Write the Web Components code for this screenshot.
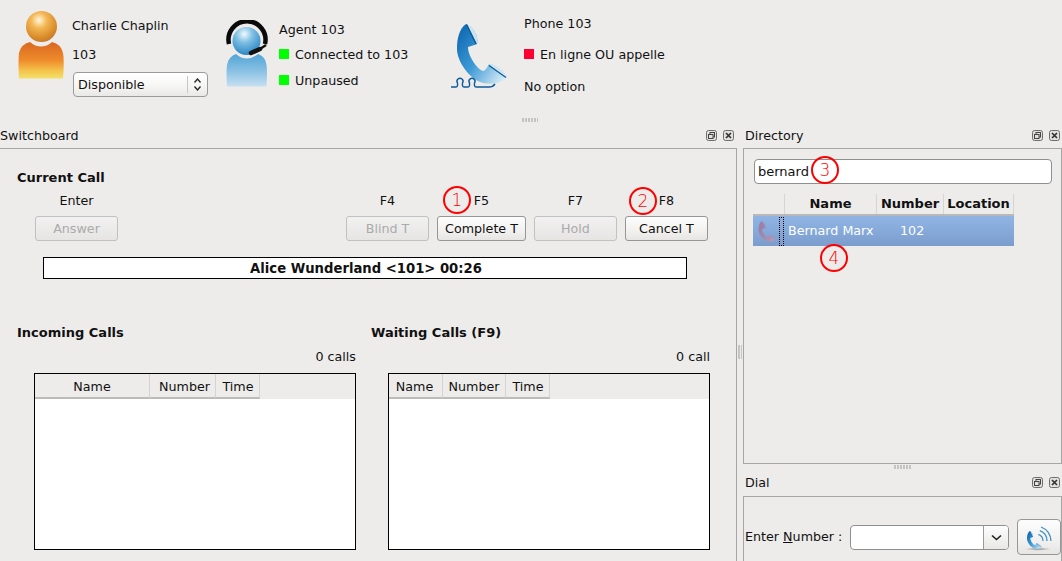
<!doctype html>
<html><head><meta charset="utf-8">
<style>
html,body{margin:0;padding:0;width:1062px;height:561px;overflow:hidden;background:#edeceb;}
body{font:12.7px/20px "DejaVu Sans",sans-serif;color:#111;}
</style></head><body>
<x-app>
  <x-top>
    <x-person style="--x:18px;--w:54px;--icon-top:11px;--text-top:15px;--tw:150px">
      <x-avatar slot="icon" kind="user"></x-avatar>
      <x-line>Charlie Chaplin</x-line>
      <x-line style="margin-top:9px">103</x-line>
      <x-select style="margin:8px 0 0 1px">Disponible</x-select>
    </x-person>
    <x-person style="--x:3px;--w:54px;--icon-top:20px;--text-top:19px;--tw:171px">
      <x-avatar slot="icon" kind="agent"></x-avatar>
      <x-line>Agent 103</x-line>
      <x-line style="margin-top:5px"><x-led color="#00ff00"></x-led>Connected to 103</x-line>
      <x-line style="margin-top:6px"><x-led color="#00ff00"></x-led>Unpaused</x-line>
    </x-person>
    <x-person style="--x:0px;--w:74px;--icon-top:22px;--text-top:13px;--tw:200px">
      <x-avatar slot="icon" kind="phone"></x-avatar>
      <x-line>Phone 103</x-line>
      <x-line style="margin-top:11px"><x-led color="#ff0033"></x-led>En ligne OU appelle</x-line>
      <x-line style="margin-top:12px">No option</x-line>
    </x-person>
    <x-grip style="--gx:522px;--gy:118px;--gw:16px;--gh:4px"></x-grip>
  </x-top>
  <x-main>
    <x-dock title-text="Switchboard" style="width:737px;height:436px;--pad-left:0px;--left-border:0;--right-gap:3px">
      <x-switchboard>
        <x-heading>Current Call</x-heading>
        <x-actions>
          <x-action label="Enter" disabled style="margin-left:18px">Answer</x-action>
          <x-action label="F4" disabled style="margin-left:228px">Blind T</x-action>
          <x-action label="F5" style="--bw:89px;margin-left:8px">Complete T</x-action>
          <x-action label="F7" disabled style="margin-left:8px">Hold</x-action>
          <x-action label="F8" style="margin-left:8px">Cancel T</x-action>
        </x-actions>
        <x-status>Alice Wunderland &lt;101&gt; 00:26</x-status>
        <x-queues>
          <x-queue title-text="Incoming Calls" count="0 calls" widths="115,66,44" pads="0,4,1"></x-queue>
          <x-queue title-text="Waiting Calls (F9)" count="0 call" widths="54,63,44" pads="-2,0,1"></x-queue>
        </x-queues>
      </x-switchboard>
    </x-dock>
    <x-grip style="--gx:738px;--gy:345px;--gw:4px;--gh:14px"></x-grip>
    <x-side>
      <x-dock title-text="Directory" style="height:339px;flex:none;--pad-left:2px;--left-border:1px;--right-gap:2px;--frame-bottom:1px">
        <x-directory>
          <x-search>bernard</x-search>
          <x-dirtable></x-dirtable>
        </x-directory>
      </x-dock>
      <x-grip style="--gx:894px;--gy:465px;--gw:18px;--gh:4px"></x-grip>
      <x-dock title-text="Dial" style="height:97px;flex:none;margin-top:7px;--pad-left:2px;--left-border:1px;--right-gap:2px;--title-h:25px">
        <x-dial></x-dial>
      </x-dock>
    </x-side>
  </x-main>
  <x-mark style="--cx:457px;--cy:200px">1</x-mark>
  <x-mark style="--cx:643px;--cy:201px">2</x-mark>
  <x-mark style="--cx:825px;--cy:170px">3</x-mark>
  <x-mark style="--cx:834px;--cy:258px">4</x-mark>
</x-app>
<script>
const HANDSET = `
<path d="M465 23C458 28 456 38 456 48C456 60 468 78 482 82C490 84 501 82 506 77L488 63C486 67 484 70 482 70C476 68 467 55 467 46C470 45 474 44 476 43C478 35 472 26 465 23Z" fill="url(#hs)"/>
<path d="M466 23C472 26 478 35 476 43ZM488 63L490 62.500C496 65 504 70 506 76.500Z" fill="var(--cap,#cfe4f2)"/>
<path d="M465.500 23.500L475 43M488 64.500L505 76.500" stroke="var(--hl,#0d5c96)" stroke-width="1.300" fill="none"/>`;
const HS_GRAD = (a,b,c)=>`<linearGradient id="hs" gradientUnits="userSpaceOnUse" x1="456" y1="40" x2="506" y2="75"><stop offset="0" stop-color="${a}"/><stop offset=".45" stop-color="${b}"/><stop offset="1" stop-color="${c}"/></linearGradient>`;
function def(name, css, html, init){
  customElements.define(name, class extends HTMLElement{
    constructor(){super();this.attachShadow({mode:'open'});}
    connectedCallback(){
      const h = typeof html==='function'?html(this):html;
      this.shadowRoot.innerHTML = `<style>${css}</style>${h}`;
      if(init) init(this);
    }
  });
}
def('x-app',':host{display:block;position:relative;width:1062px;height:561px;overflow:hidden}','<slot></slot>');
def('x-top',':host{display:flex;height:125px}','<slot></slot>');
def('x-main',':host{display:flex;height:436px}','<slot></slot>');
def('x-side',':host{display:flex;flex-direction:column;flex:1;min-width:0;margin-left:6px}','<slot></slot>');
def('x-person',`:host{display:flex;margin-left:var(--x)}
 .i{width:var(--w);margin-top:var(--icon-top)}
 .t{width:var(--tw);margin-top:var(--text-top);display:flex;flex-direction:column;align-items:flex-start}`,
 '<div class="i"><slot name="icon"></slot></div><div class="t"><slot></slot></div>');
def('x-line',':host{display:flex;align-items:center;box-sizing:border-box;padding-top:2px;height:20px;white-space:nowrap}','<slot></slot>');
def('x-led',':host{display:block;width:10px;height:10px;background:var(--c);margin:-2px 6px 0 0}','',el=>el.style.setProperty('--c',el.getAttribute('color')));
def('x-avatar',':host{display:block}svg{display:block}',el=>{
 const k=el.getAttribute('kind');
 if(k==='user') return `<svg width="47" height="69" viewBox="18 11 47 69">
  <defs><radialGradient id="h" cx=".42" cy=".3" r=".72"><stop offset="0" stop-color="#fff6de"/><stop offset=".35" stop-color="#f4b755"/><stop offset=".8" stop-color="#d98a28"/><stop offset="1" stop-color="#c27a30"/></radialGradient>
  <linearGradient id="b" x1="0" y1="0" x2="0" y2="1"><stop offset="0" stop-color="#d9681e"/><stop offset=".5" stop-color="#ee8b2c"/><stop offset=".78" stop-color="#f5c24a"/><stop offset="1" stop-color="#f3e06a"/></linearGradient></defs>
  <path d="M19 78.500Q18 60 19 53Q21 44 30 42Q35 46.500 41 46.500Q47 46.500 52 42Q61 44 63 53Q64.500 60 63 78.500Z" fill="url(#b)"/>
  <circle cx="41.500" cy="26.500" r="15.500" fill="url(#h)"/></svg>`;
 if(k==='agent') return `<svg width="46" height="68" viewBox="224 20 46 68">
  <defs><radialGradient id="h" cx=".42" cy=".25" r=".75"><stop offset="0" stop-color="#f2fafd"/><stop offset=".4" stop-color="#7fc0e4"/><stop offset="1" stop-color="#2b86c4"/></radialGradient>
  <linearGradient id="b" x1="0" y1="0" x2="0" y2="1"><stop offset="0" stop-color="#51a4d6"/><stop offset=".55" stop-color="#8cc3e4"/><stop offset="1" stop-color="#c7e0f0"/></linearGradient></defs>
  <path d="M226 86.500Q225 72 226 65Q227 57 235 54Q240 58.500 246 58.500Q252 58.500 257 54Q265 57 265.500 65Q266.500 72 265.500 86.500Z" fill="url(#b)"/>
  <circle cx="245.500" cy="41" r="14" fill="url(#h)"/>
  <path d="M228 44A18.500 18.500 0 1 1 264 44" fill="none" stroke="#0a0a0a" stroke-width="4.500"/>
  <path d="M265 45L259 49" stroke="#111" stroke-width="2.500"/>
  <path d="M250 53L259 49" stroke="#111" stroke-width="4.500" stroke-linecap="round"/></svg>`;
 return `<svg width="60" height="68" viewBox="449 21 60 68">
  <defs>${HS_GRAD('#1570b8','#3f9bd6','#dcedf6')}</defs>${HANDSET}
  <path d="M450 86H455Q457 86 456.500 82A3 3 0 1 1 461.500 82Q461 86 463 86H467Q469 86 468.500 82A3 3 0 1 1 473.500 82Q473 86 475 86H488Q492 86 494 83" fill="none" stroke="#0b5a9a" stroke-width="1.400"/></svg>`;
});
def('x-select',`:host{display:flex;align-items:center;box-sizing:border-box;width:135px;height:25px;border:1px solid #9a9a9a;border-radius:4px;background:linear-gradient(#fff,#f6f6f5 55%,#e9e8e7);padding-left:4px;position:relative}
 .t{flex:1}.s{width:1px;height:17px;background:#c6c6c6;margin-right:5px}svg{display:block;margin-right:5px}`,
 `<span class="t"><slot></slot></span><span class="s"></span><svg width="9" height="15" viewBox="0 0 9 15"><path d="M1.500 5.500L4.500 2L7.500 5.500M1.500 9.500L4.500 13L7.500 9.500" fill="none" stroke="#222" stroke-width="1.300"/></svg>`);
def('x-grip',`:host{position:absolute;left:var(--gx);top:var(--gy);width:var(--gw);height:var(--gh);background-image:radial-gradient(circle at 1px 1px,#c2c2c2 .7px,transparent 1px);background-size:3px 2px}`,'');
def('x-dock',`:host{display:flex;flex-direction:column;box-sizing:border-box}
 .bar{display:flex;align-items:center;box-sizing:border-box;height:var(--title-h,23px);padding:0 var(--right-gap) 2px var(--pad-left);flex:none}
 .n{flex:1}svg{display:block;margin-left:6px}
 .f{flex:1;min-height:0;border:1px solid #a6a6a6;border-left-width:var(--left-border);border-bottom-width:var(--frame-bottom,0);box-sizing:border-box}`,
 el=>`<div class="bar"><span class="n">${el.getAttribute('title-text')}</span>
 <svg width="11" height="11" viewBox="0 0 11 11"><rect x=".5" y=".5" width="10" height="10" rx="2" fill="#e2e1e0" stroke="#6d6d6d"/><rect x="4" y="2.500" width="4.500" height="4.500" fill="none" stroke="#444"/><rect x="2.500" y="4.500" width="4.500" height="4" fill="#e2e1e0" stroke="#444"/></svg>
 <svg width="11" height="11" viewBox="0 0 11 11"><rect x=".5" y=".5" width="10" height="10" rx="2" fill="#e2e1e0" stroke="#6d6d6d"/><path d="M3 3L8 8M8 3L3 8" stroke="#333" stroke-width="1.700"/></svg></div>
 <div class="f"><slot></slot></div>`);
def('x-switchboard',':host{display:block;padding:18px 0 0 17px}','<slot></slot>');
def('x-heading',':host{display:block;font-weight:bold;font-size:13px;box-sizing:border-box;padding-top:1px;height:20px;white-space:nowrap}','<slot></slot>');
def('x-actions',':host{display:flex;margin-top:3px}','<slot></slot>');
def('x-action',`:host{display:flex;flex-direction:column;align-items:center}
 .l{height:20px;margin-bottom:6px;box-sizing:border-box;padding-top:1px}
 .b{box-sizing:border-box;width:var(--bw,83px);height:25px;display:flex;align-items:center;justify-content:center;border:1px solid #969696;border-radius:3px;background:linear-gradient(#fdfdfd,#f2f1f0 60%,#e6e5e4);white-space:nowrap}
 :host([disabled]) .b{border-color:#c1c1c1;color:#aaa;background:linear-gradient(#f2f1f1,#e6e5e4)}`,
 el=>`<div class="l">${el.getAttribute('label')}</div><div class="b"><slot></slot></div>`);
def('x-status',`:host{display:block;box-sizing:border-box;margin:16px 0 0 26px;width:644px;height:22px;border:1px solid #000;background:#fff;font-weight:bold;font-size:13.2px;text-align:center;line-height:22px;padding-left:2px;white-space:nowrap}`,'<slot></slot>');
def('x-queues',':host{display:grid;grid-template-columns:339px 339px;column-gap:15px;margin-top:43px}','<slot></slot>');
def('x-queue',`:host{display:block}
 .t{font-weight:bold;font-size:13px;height:20px;white-space:nowrap;box-sizing:border-box;padding-top:1px}.c{text-align:right;height:20px;margin-top:4px;box-sizing:border-box;padding-top:1px}
 .box{box-sizing:border-box;margin:7px 0 0 17px;width:322px;height:177px;border:1px solid #000;background:#fff}
 .hd{display:flex;height:25px;background:#edeceb}
 .hc{box-sizing:border-box;height:25px;display:flex;align-items:center;justify-content:center;border-right:1px solid #d4d3d2;border-bottom:2px solid #bcbbba;padding-top:2px}`,
 el=>{const w=el.getAttribute('widths').split(',');const p=el.getAttribute('pads').split(',').map(Number);const n=['Name','Number','Time'];
 return `<div class="t">${el.getAttribute('title-text')}</div><div class="c">${el.getAttribute('count')}</div><div class="box"><div class="hd">${n.map((x,i)=>`<div class="hc" style="width:${w[i]}px;${p[i]<0?'padding-right:'+(-p[i]):'padding-left:'+p[i]}px">${x}</div>`).join('')}</div></div>`});
def('x-directory',':host{display:block;padding:10px 0 0 10px}','<slot></slot>');
def('x-search',`:host{display:flex;align-items:center;box-sizing:border-box;width:298px;height:25px;border:1px solid #8f8f8f;border-radius:4px;background:#fff;padding-left:3px;font-size:13px}`,'<slot></slot>');
def('x-dirtable',`:host{display:block;margin:10px 0 0 -1px;width:261px}
 .hd{display:flex;height:22px;border-bottom:2px solid #b9b8b7;box-sizing:border-box;font-weight:bold;font-size:13px}
 .hd div{box-sizing:border-box;display:flex;align-items:center;justify-content:center;border-right:1px solid #d6d5d4;white-space:nowrap}
 .row{display:flex;align-items:center;height:30px;background:linear-gradient(#90b5e4,#7b9dce);color:#fff;position:relative;white-space:nowrap}
 .ic{width:26px;padding-left:5px;box-sizing:border-box;--hl:transparent;--cap:#a98fb4}
 .focus{box-sizing:border-box;width:5px;height:29px;border:1px dotted #000;margin-right:4px}
 svg{display:block}`,
 `<div class="hd"><div style="width:32px"></div><div style="width:92px">Name</div><div style="width:67px">Number</div><div style="width:70px">Location</div></div>
 <div class="row"><div class="ic"><svg width="18" height="21" viewBox="455 22 52 62"><defs>${HS_GRAD('#9a7fa8','#a088ae','#b49ab8')}</defs>${HANDSET}</svg></div><div class="focus"></div><span style="width:112px">Bernard Marx</span><span>102</span></div>`);
def('x-dial',`:host{display:flex;align-items:center;padding:22px 0 0 1px}
 .l{width:105px;white-space:nowrap}
 .c{box-sizing:border-box;width:159px;height:25px;border:1px solid #8f8f8f;border-radius:4px;background:#fff;display:flex;overflow:hidden}
 .c i{flex:1}.c b{width:24px;border-left:1px solid #9a9a9a;background:linear-gradient(#fdfdfd,#e9e8e7);display:flex;align-items:center;justify-content:center}
 .b{box-sizing:border-box;width:44px;height:36px;margin-left:8px;border:1px solid #969696;border-radius:4px;background:linear-gradient(#fdfdfd,#f2f1f0 60%,#e6e5e4);display:flex;align-items:center;justify-content:center}
 svg{display:block}`,
 `<span class="l">Enter <u>N</u>umber :</span><div class="c"><i></i><b><svg width="11" height="7" viewBox="0 0 11 7"><path d="M1 1.500L5.500 5.500L10 1.500" fill="none" stroke="#222" stroke-width="1.600"/></svg></b></div>
 <div class="b"><svg width="26" height="28" viewBox="1027 522 26 28"><defs>${HS_GRAD('#1570b8','#3f9bd6','#cfe6f3')}<radialGradient id="sh"><stop offset="0" stop-color="#8a8a8a"/><stop offset="1" stop-color="#9a9a9a" stop-opacity="0"/></radialGradient></defs>
 <ellipse cx="1039" cy="548" rx="13" ry="1.800" fill="url(#sh)"/>
 <g transform="translate(891.2 523.1) scale(.3)">${HANDSET}</g>
 <path d="M1039.400 533.400A7 7 0 0 1 1044 540M1040.800 529.700A11 11 0 0 1 1048 540M1042 526A15 15 0 0 1 1052 540" fill="none" stroke="#3f8fc6" stroke-width="1.300"/></svg></div>`);
def('x-mark',`:host{position:absolute;left:calc(var(--cx) - 14px);top:calc(var(--cy) - 14px);box-sizing:border-box;width:28px;height:28px;border:2px solid #f00;border-radius:50%;color:#f00;font:17px/24px "DejaVu Sans ExtraLight","DejaVu Sans Light","DejaVu Sans",sans-serif;font-weight:200;text-align:center}`,'<slot></slot>');
</script>
</body></html>
